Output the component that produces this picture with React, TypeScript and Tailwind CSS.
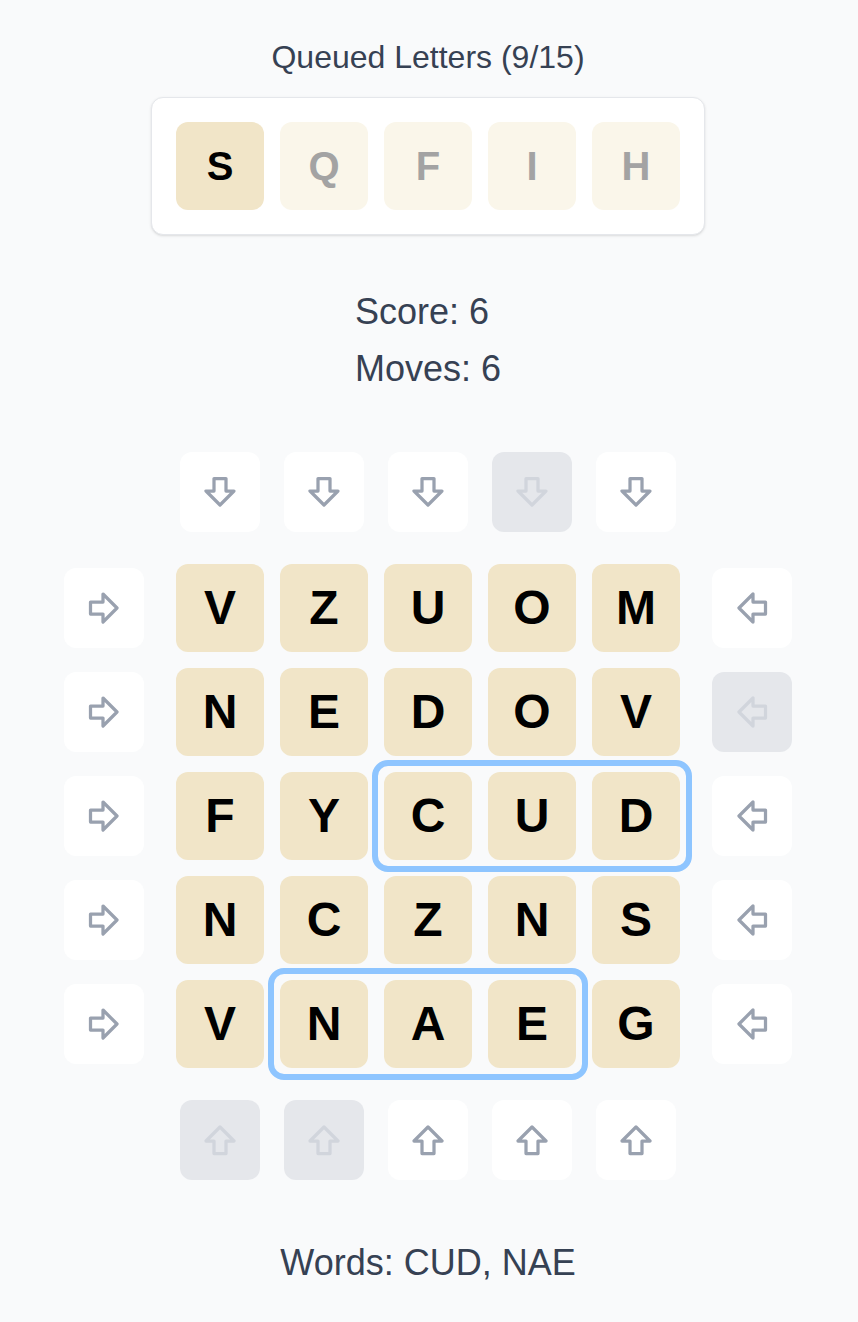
import React from 'react';

type Dir = 'down' | 'up' | 'left' | 'right';

const queue = ['S', 'Q', 'F', 'I', 'H'];

const board = [
  ['V', 'Z', 'U', 'O', 'M'],
  ['N', 'E', 'D', 'O', 'V'],
  ['F', 'Y', 'C', 'U', 'D'],
  ['N', 'C', 'Z', 'N', 'S'],
  ['V', 'N', 'A', 'E', 'G'],
];

const topDisabled = [false, false, false, true, false];
const bottomDisabled = [true, true, false, false, false];
const leftDisabled = [false, false, false, false, false];
const rightDisabled = [false, true, false, false, false];

const rotation: Record<Dir, string> = {
  down: '',
  up: 'rotate-180',
  left: 'rotate-90',
  right: '-rotate-90',
};

const ArrowIcon: React.FC<{ dir: Dir }> = ({ dir }) => (
  <svg
    width="32"
    height="32"
    viewBox="0 0 32 32"
    fill="none"
    stroke="currentColor"
    strokeWidth="3.25"
    strokeLinejoin="round"
    className={rotation[dir]}
  >
    <path d="M10 2.5H22V15H30L16 29L2 15H10Z" />
  </svg>
);

const ArrowButton: React.FC<{ dir: Dir; disabled?: boolean }> = ({ dir, disabled }) => (
  <button
    disabled={disabled}
    className={
      disabled
        ? 'flex h-20 w-20 items-center justify-center rounded-xl bg-gray-200 text-gray-300'
        : 'flex h-20 w-20 items-center justify-center rounded-xl bg-white text-gray-400'
    }
  >
    <ArrowIcon dir={dir} />
  </button>
);

const Tile: React.FC<{ letter: string }> = ({ letter }) => (
  <div className="flex h-22 w-22 items-center justify-center rounded-xl bg-[#f1e5c8] text-[48px] font-bold leading-none text-black">
    {letter}
  </div>
);

export default function App() {
  return (
    <div className="flex min-h-screen flex-col items-center bg-gray-50 pt-[39px] pr-[2px] font-['Liberation_Sans',Arial,sans-serif] text-gray-700">
      <h2 className="text-[32px] leading-[37px]">Queued Letters (9/15)</h2>

      <div className="mt-[21px] flex gap-4 rounded-xl border border-gray-200 bg-white p-6 shadow-sm">
        {queue.map((l, i) => (
          <div
            key={i}
            className={
              i === 0
                ? 'flex h-22 w-22 items-center justify-center rounded-xl bg-[#f1e5c8] text-[40px] font-bold leading-none text-black'
                : 'flex h-22 w-22 items-center justify-center rounded-xl bg-[#faf6ea] text-[40px] font-bold leading-none text-[#a3a3a3]'
            }
          >
            {l}
          </div>
        ))}
      </div>

      <div className="mt-[48px] flex flex-col items-start text-[36px] leading-[57px]">
        <div>Score: 6</div>
        <div>Moves: 6</div>
      </div>

      <div className="mt-[55px] grid grid-cols-[96px_504px_96px] grid-rows-[96px_504px_96px] gap-4">
        <div />
        <div className="grid grid-cols-5 gap-4">
          {topDisabled.map((d, i) => (
            <div key={i} className="flex items-start justify-center">
              <ArrowButton dir="down" disabled={d} />
            </div>
          ))}
        </div>
        <div />

        <div className="grid grid-rows-5 gap-4">
          {leftDisabled.map((d, i) => (
            <div key={i} className="flex items-center justify-start">
              <ArrowButton dir="right" disabled={d} />
            </div>
          ))}
        </div>

        <div className="grid">
          <div className="col-start-1 row-start-1 grid grid-cols-5 grid-rows-5 gap-4">
            {board.flat().map((l, i) => (
              <Tile key={i} letter={l} />
            ))}
          </div>
          <div className="pointer-events-none col-start-1 row-start-1 grid grid-cols-5 grid-rows-5 gap-4">
            <div className="col-start-3 col-span-3 row-start-3 -m-3 rounded-2xl border-[6px] border-blue-300" />
            <div className="col-start-2 col-span-3 row-start-5 -m-3 rounded-2xl border-[6px] border-blue-300" />
          </div>
        </div>

        <div className="grid grid-rows-5 gap-4">
          {rightDisabled.map((d, i) => (
            <div key={i} className="flex items-center justify-end">
              <ArrowButton dir="left" disabled={d} />
            </div>
          ))}
        </div>

        <div />
        <div className="grid grid-cols-5 gap-4">
          {bottomDisabled.map((d, i) => (
            <div key={i} className="flex items-end justify-center">
              <ArrowButton dir="up" disabled={d} />
            </div>
          ))}
        </div>
        <div />
      </div>

      <div className="mt-[63px] text-[36px] leading-[40px]">Words: CUD, NAE</div>
    </div>
  );
}
